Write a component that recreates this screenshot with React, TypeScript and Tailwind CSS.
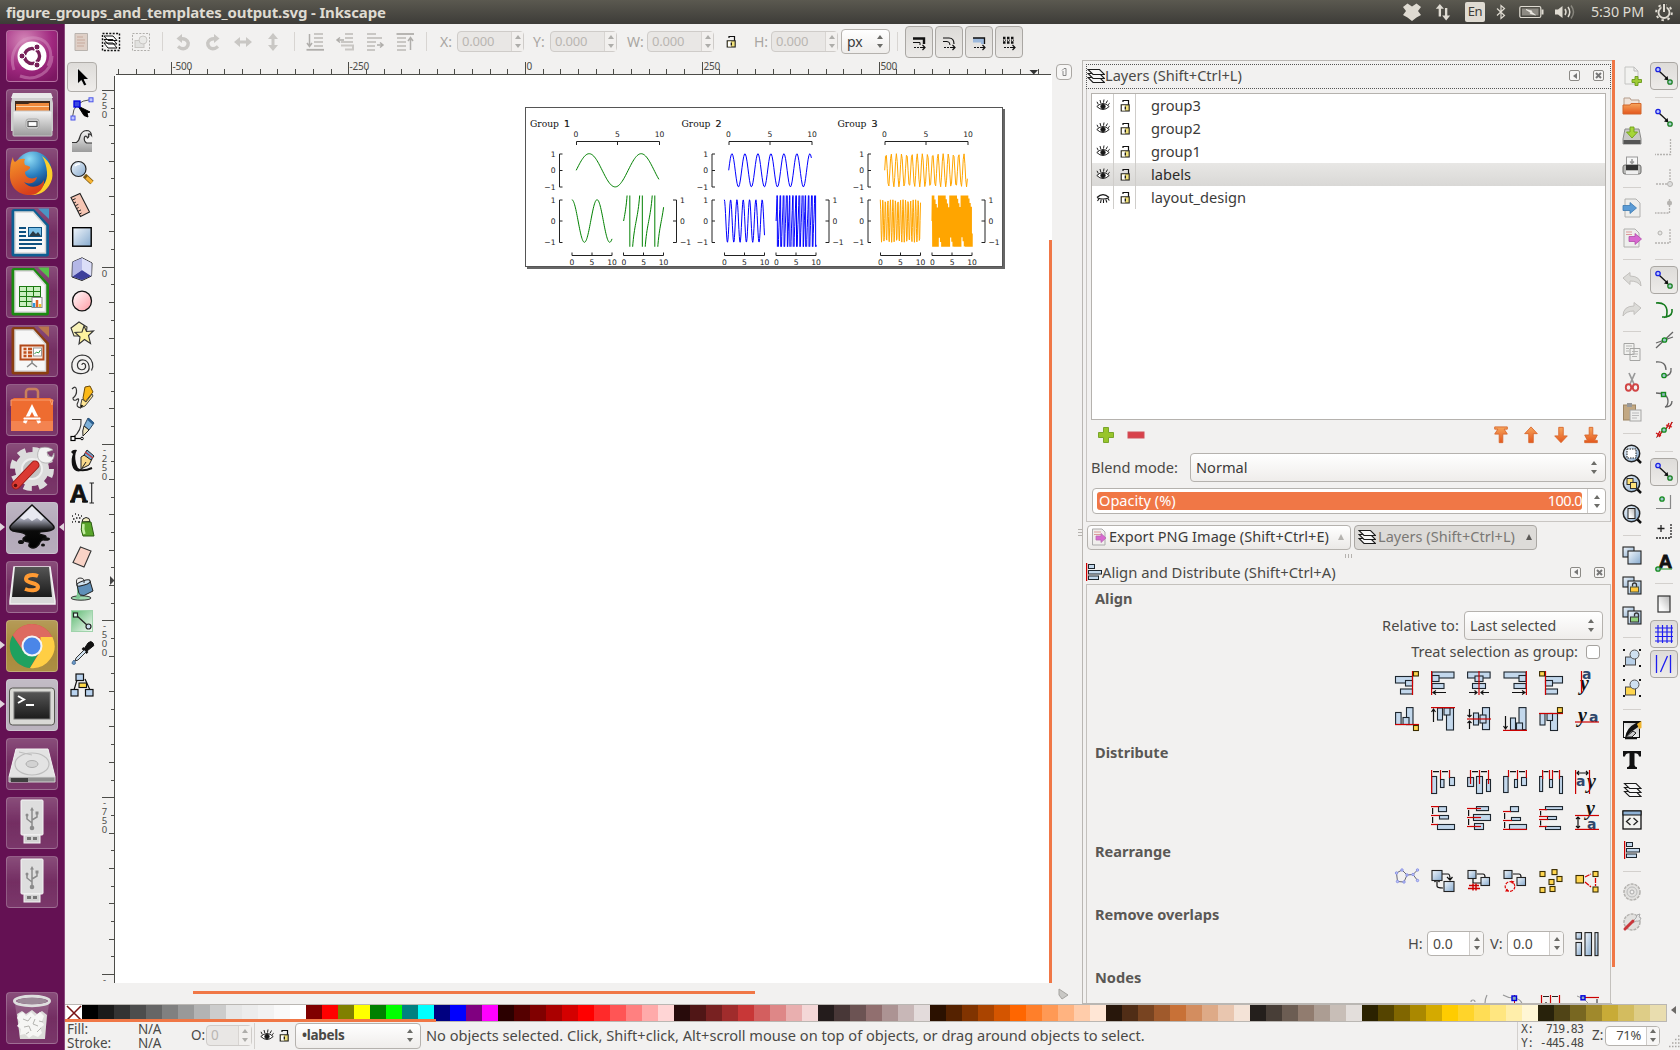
import React from "react";

/* ---------- palette ---------- */
const SWATCHES = (
  "000000 1a1a1a 333333 4d4d4d 666666 808080 999999 b3b3b3 cccccc e6e6e6 ececec f2f2f2 f9f9f9 ffffff " +
  "800000 ff0000 808000 ffff00 008000 00ff00 008080 00ffff 000080 0000ff 800080 ff00ff " +
  "2b0000 550000 800000 aa0000 d40000 ff0000 ff2a2a ff5555 ff8080 ffaaaa ffd5d5 " +
  "280b0b 501616 782121 a02c2c c83737 d35f5f de8787 e9afaf f4d7d7 " +
  "241c1c 483737 6c5353 916f6f ac9393 c8b7b7 e3dbdb " +
  "2b1100 552200 803300 aa4400 d45500 ff6600 ff7f2a ff9955 ffb380 ffccaa ffe6d5 " +
  "28170b 502d16 784421 a05a2c c87137 d38d5f deaa87 e9c6af f4e3d7 " +
  "241f1c 483e37 6c5d53 917c6f ac9d93 c8beb7 e3dedb " +
  "2b2200 554400 806600 aa8800 d4aa00 ffcc00 ffd42a ffdd55 ffe680 ffeeaa fff6d5 " +
  "28220b 504416 786721 a0892c c8ab37 d3bc5f decd87 e9ddaf"
).split(" ");

type Kids = { children?: React.ReactNode };

function Svg({ s = 24, v = s, children }: { s?: number; v?: number } & Kids) {
  return (
    <svg width={s} height={s} viewBox={`0 0 ${v} ${v}`} fill="none" className="block shrink-0 overflow-visible">
      {children}
    </svg>
  );
}

/* shared gradients */
function Defs() {
  return (
    <svg width="0" height="0" className="absolute">
      <defs>
        <linearGradient id="blue" x1="0" y1="0" x2="1" y2="1">
          <stop offset="0" stopColor="#f2f7fc" />
          <stop offset="1" stopColor="#86aace" />
        </linearGradient>
        <linearGradient id="pink" x1="0" y1="0" x2="1" y2="1">
          <stop offset="0" stopColor="#fff" />
          <stop offset="1" stopColor="#ff9aa4" />
        </linearGradient>
        <linearGradient id="green" x1="0" y1="0" x2="1" y2="1">
          <stop offset="0" stopColor="#5cb870" />
          <stop offset="1" stopColor="#f4fbf5" />
        </linearGradient>
        <linearGradient id="gray" x1="0" y1="0" x2="0" y2="1">
          <stop offset="0" stopColor="#f4f4f4" />
          <stop offset="1" stopColor="#9b9b9b" />
        </linearGradient>
        <linearGradient id="page" x1="0" y1="1" x2="1" y2="0">
          <stop offset="0" stopColor="#fff" />
          <stop offset="0.3" stopColor="#f8f8f8" />
          <stop offset="1" stopColor="#b4b4b4" />
        </linearGradient>
        <linearGradient id="dark" x1="0" y1="0" x2="0" y2="1">
          <stop offset="0" stopColor="#555" />
          <stop offset="1" stopColor="#1c1c1c" />
        </linearGradient>
        <linearGradient id="ink" x1="0" y1="0" x2="0" y2="1">
          <stop offset="0" stopColor="#fff" />
          <stop offset="0.35" stopColor="#9a9cab" />
          <stop offset="0.6" stopColor="#0b0b0b" />
          <stop offset="1" stopColor="#000" />
        </linearGradient>
        <linearGradient id="orange" x1="0" y1="0" x2="0" y2="1">
          <stop offset="0" stopColor="#f6a55c" />
          <stop offset="1" stopColor="#e4571d" />
        </linearGradient>
        <linearGradient id="fox" x1="0" y1="0" x2="0.4" y2="1">
          <stop offset="0" stopColor="#f79a2a" />
          <stop offset="1" stopColor="#d8401c" />
        </linearGradient>
        <radialGradient id="globe" cx="0.4" cy="0.2" r="0.9">
          <stop offset="0" stopColor="#8fdcf5" />
          <stop offset="0.5" stopColor="#2a7fc0" />
          <stop offset="1" stopColor="#0c2a6a" />
        </radialGradient>
        <radialGradient id="ubu" cx="0.35" cy="0.2" r="0.9">
          <stop offset="0" stopColor="#d487b8" />
          <stop offset="0.6" stopColor="#a0287f" />
          <stop offset="1" stopColor="#7c1762" />
        </radialGradient>
      </defs>
    </svg>
  );
}

/* ---------- launcher ---------- */
function LibreDoc({ c1, c2, children }: { c1: string; c2: string } & Kids) {
  return (
    <Svg s={52}>
      <path d="M8 2H28L43 18V47a2.500 2.500 0 0 1-2.500 2.500H8A2.500 2.500 0 0 1 5.500 47V4.500A2.500 2.500 0 0 1 8 2Z" fill={c1} />
      <path d="M32 1.500H43V12Z" fill={c2} />
      <path d="M9 5H27L39.500 19V46H9Z" fill="#f7f7f7" stroke="#d6d6d6" strokeWidth="1.500" />
      {children}
    </Svg>
  );
}

const UsbIcon = () => (
  <Svg s={52}>
    <rect x="15" y="3" width="22" height="35" rx="1" fill="#dedede" stroke="#f5f5f5" />
    <rect x="18" y="38" width="16" height="8" fill="#d2d2d2" stroke="#f5f5f5" />
    <path d="M21 40h4v3h-4zM27 40h4v3h-4z" fill="#777" />
    <path d="M26 31V13M26 26l-5-4v-4M26 23l5-3v-4" stroke="#8b8b8b" strokeWidth="1.500" />
    <path d="M24 13.500h4L26 10Z" fill="#8b8b8b" />
    <circle cx="26" cy="31" r="2.300" fill="#8b8b8b" />
    <circle cx="21" cy="18" r="1.500" fill="#8b8b8b" />
    <rect x="29.500" y="14.500" width="3" height="3" fill="#8b8b8b" />
  </Svg>
);

const LAUNCHER: { bg?: string; run?: boolean; focus?: boolean; icon: React.ReactNode }[] = [
  {
    bg: "bg-[#97327a]",
    icon: (
      <Svg s={52}>
        <rect width="52" height="52" rx="4" fill="url(#ubu)" />
        <path d="M8 40C2 22 14 6 30 8c14 2 18 16 12 28M14 46c16 6 32-4 32-20" stroke="#d99cc5" strokeOpacity="0.450" strokeWidth="3" />
        <circle cx="26" cy="26" r="14.500" fill="#fff" />
        <circle cx="26" cy="26" r="7.500" stroke="#772059" strokeWidth="3.500" />
        <path d="M26 26 16 26M26 26l5-9M26 26l5 9" stroke="#fff" strokeWidth="1.500" />
        <g fill="#772059" stroke="#fff">
          <circle cx="16" cy="26" r="3" />
          <circle cx="31" cy="17" r="3" />
          <circle cx="31" cy="35" r="3" />
        </g>
        <circle cx="26" cy="26" r="5.500" fill="#fff" />
      </Svg>
    ),
  },
  {
    icon: (
      <Svg s={52}>
        <path d="M7 4H45L47 14V42H5V14Z" fill="#cfcfcf" />
        <path d="M5 9 7 4H45L47 9Z" fill="#e8e8e8" />
        <rect x="9" y="12" width="35" height="12" fill="#3f2a1c" />
        <path d="M10 15H22L24 14H43V22H10Z" fill="#ef8a3c" />
        <path d="M10 17.500H43" stroke="#fbd3a8" />
        <rect x="7" y="22" width="39" height="25" rx="1" fill="url(#gray)" stroke="#c9c9c9" />
        <rect x="20" y="30" width="13" height="10" rx="2.500" fill="#d9d9d9" stroke="#a8a8a8" />
        <rect x="22" y="32.500" width="9" height="5" fill="#fff" stroke="#555" strokeWidth="1.200" />
      </Svg>
    ),
  },
  {
    icon: (
      <Svg s={52}>
        <circle cx="27" cy="22" r="18.500" fill="url(#globe)" />
        <path d="M36 8c8 6 12 14 10 23-3 11-12 17-22 16 12-5 18-13 17-23-.5-6-2-11-5-16Z" fill="#fbcf2b" />
        <path d="M7 9c0 3 1 4 2 5 3-3 7-4 10-3-1 2-1 4 0 6 2 1 6 1 5 3-1 2-4 3-5 4 0 6 7 8 12 5-1 6-8 8-13 5 5 7 16 6 20-2 1 7-5 15-14 15C12 47 3 39 4 25c0-6 1-12 3-16Z" fill="url(#fox)" />
      </Svg>
    ),
  },
  {
    icon: (
      <LibreDoc c1="#0e5e92" c2="#4a94c4">
        <rect x="22.500" y="20.500" width="13" height="9" fill="#7cc0e8" stroke="#0e5080" />
        <path d="m23 29 4-5 3 3 2-2 3 4Z" fill="#2b3b46" />
        <path d="M13 21h7M13 25h7M13 29h7M13 33h23M13 37h23M13 41h17" stroke="#0e5080" strokeWidth="2" />
      </LibreDoc>
    ),
  },
  {
    icon: (
      <LibreDoc c1="#1c8a12" c2="#58c04a">
        <rect x="13.500" y="20.500" width="21" height="20" fill="#c9efc0" stroke="#1c7a12" />
        <path d="M20.500 20V41M27.500 20V41M13 25.500H35M13 30.500H35M13 35.500H35" stroke="#1c7a12" />
        <rect x="26" y="31.500" width="10" height="10" fill="#fff" stroke="#8a8a8a" />
        <path d="M28 41v-4" stroke="#2d97dc" strokeWidth="2.500" />
        <path d="M31 41v-7" stroke="#e0662a" strokeWidth="2.500" />
        <path d="M34 41v-3" stroke="#f4c430" strokeWidth="2.500" />
      </LibreDoc>
    ),
  },
  {
    icon: (
      <LibreDoc c1="#8a3e12" c2="#b9764c">
        <rect x="14.500" y="20.500" width="23" height="14" fill="#fbe9df" stroke="#b2491a" strokeWidth="2" />
        <path d="M17.500 24h3M17.500 27.500h3M17.500 31h3M22 24h4M22 27.500h4M22 31h4" stroke="#c0501c" strokeWidth="2.400" />
        <rect x="27.500" y="23" width="8" height="8" fill="#fff" stroke="#999" />
        <path d="m28.500 29 2-2 2 1 2-3" stroke="#2f9a44" />
        <path d="M26 35v3M21 42l5-4 5 4" stroke="#888" strokeWidth="1.500" />
      </LibreDoc>
    ),
  },
  {
    icon: (
      <Svg s={52}>
        <path d="M20 14V8a3 3 0 0 1 3-3h6a3 3 0 0 1 3 3v6" stroke="#c9805c" strokeWidth="2.500" />
        <path d="M5 16 8 14H44L47 16V47H5Z" fill="#ee6c30" />
        <path d="M5 16H47L46 21 44 16M5 16v6" stroke="#f8a070" />
        <path d="M5 37H47V47H5Z" fill="#f38350" />
        <path d="m18.500 39 7.500-15 7.500 15" stroke="#fff" strokeWidth="3.500" />
        <rect x="17" y="33" width="18" height="3" rx="1.500" fill="#fff" stroke="#ee6c30" />
      </Svg>
    ),
  },
  {
    icon: (
      <Svg s={52}>
        <circle cx="26" cy="26" r="17" fill="#dcdcdc" />
        <circle cx="26" cy="26" r="19" stroke="#dcdcdc" strokeWidth="6" strokeDasharray="8 6.920" />
        <circle cx="26" cy="26" r="10" fill="#c4c4c4" stroke="#efefef" strokeWidth="2" />
        <path d="M28 22 38 12" stroke="#ededed" strokeWidth="6" />
        <path d="M34 5c6-2 11 0 13 2l-6 2 1 4 4 1 2-4c1 6-3 10-7 10s-7-1-9-5c-1-4 0-7 2-10Z" fill="#f2f2f2" stroke="#a4a4a4" strokeWidth="0.700" />
        <path d="M10 42 29 22" stroke="#9c1d18" strokeWidth="9" strokeLinecap="round" />
        <path d="M10 42 29 22" stroke="#db3a33" strokeWidth="7" strokeLinecap="round" />
        <circle cx="9.500" cy="42.500" r="1.800" fill="#5c0f0c" />
      </Svg>
    ),
  },
  {
    bg: "bg-[#b3a9b9]",
    run: true,
    focus: true,
    icon: (
      <Svg s={52}>
        <path d="M26 3 46 22c4 4 2 6-4 7-4 1-8 0-9 2 0 3 7 1 7 4s-5 2-6 5c-1 4-6 8-10 5-3-2 1-3-1-5-2-1-6 0-6-3 0-2 4-2 3-4-1-3-9-3-13-4-4-2-4-4-1-7Z" fill="url(#ink)" stroke="#111" strokeWidth="1.500" />
        <path d="M26 5 14 16l4 2 4-2 4 3 5-3 4 3 3-3Z" fill="#e8e9f0" />
        <ellipse cx="15" cy="40" rx="3" ry="2" fill="#111" />
        <ellipse cx="40" cy="37" rx="4" ry="1.800" fill="#111" />
        <ellipse cx="37" cy="43" rx="2" ry="1.500" fill="#111" />
      </Svg>
    ),
  },
  {
    icon: (
      <Svg s={52}>
        <path d="M8 6H44L49 40V43H4V40Z" fill="#d8d8d8" stroke="#f1f1f1" strokeWidth="1.500" />
        <path d="M9 6H43L46 36H6Z" fill="url(#dark)" />
        <path d="M32 15c-5-2-12-1-12 3 0 5 12 3 12 8 0 4-8 4-13 2" stroke="#ff9a33" strokeWidth="4" />
      </Svg>
    ),
  },
  {
    bg: "bg-[#a8893a]",
    run: true,
    icon: (
      <Svg s={52}>
        <circle cx="26" cy="26" r="22" fill="#dd5246" />
        <path d="M6.500 15.500A22 22 0 0 0 24 48L34 31H18Z" fill="#1fa15f" />
        <path d="M46.500 17A22 22 0 0 1 24 48L34.500 31V17Z" fill="#ffce44" />
        <path d="M7 15 17 31H26V17H46A22 22 0 0 0 7 15Z" fill="#dd6a60" />
        <circle cx="26" cy="26" r="10.500" fill="#f4f4f4" />
        <circle cx="26" cy="26" r="8.500" fill="#4a86e8" />
      </Svg>
    ),
  },
  {
    bg: "bg-[#b8b0bb]",
    run: true,
    icon: (
      <Svg s={52}>
        <rect x="3.500" y="9" width="45" height="37" rx="3" fill="#d9d9d5" stroke="#55554f" />
        <rect x="8" y="13" width="36" height="27" fill="url(#dark)" stroke="#777" />
        <path d="m12 17 6 3.500-6 3.500" stroke="#fff" strokeWidth="2" />
        <path d="M20 26h8" stroke="#fff" strokeWidth="2" />
      </Svg>
    ),
  },
  {
    icon: (
      <Svg s={52}>
        <path d="M10 11H42L49 39H3Z" fill="#e3e3e3" stroke="#f3f3f3" />
        <path d="M3 39H49V44H3Z" fill="#8f8f8f" stroke="#d0d0d0" />
        <path d="M5 40H22V44H5Z" fill="#3f3f3f" />
        <ellipse cx="26" cy="26" rx="17" ry="11" stroke="#bdbdbd" strokeWidth="1.200" />
        <ellipse cx="26" cy="26" rx="6" ry="3.500" fill="#d2d2d2" stroke="#adadad" />
        <path d="M13 14 26 17" stroke="#bdbdbd" />
      </Svg>
    ),
  },
  { icon: <UsbIcon /> },
  { icon: <UsbIcon /> },
];

const TrashIcon = () => (
  <Svg s={52}>
    <path d="M9 12 14 47H38L43 12Z" fill="#b79bb0" fillOpacity="0.350" />
    <path d="m11 22 5-3 4 3 6-4 5 4 5-3 5 4-2 24H14Z" fill="#dcdcd9" />
    <path d="m13 22 4-2 3 4 5-4 4 4 5-4 4 4-2 5 2 4-4 3 2 5-4 4-5-2-4 3-4-4-5 1 1-6-4-3 3-4-3-4Z" fill="#f6f6f4" />
    <path d="m17 27 5 2 3-4M29 27l-2 5 5 2M18 35l5-1 2 5M31 40l4-4M20 42l3-2M33 29l4 1" stroke="#b4b4b0" />
    <ellipse cx="26" cy="9" rx="17.500" ry="4.800" stroke="#dedede" strokeWidth="3" />
    <ellipse cx="26" cy="9" rx="15" ry="3.300" fill="#9d8a99" />
  </Svg>
);

function Tile({ bg = "bg-[#7a3a6a]/70", run, focus, children }: { bg?: string; run?: boolean; focus?: boolean } & Kids) {
  return (
    <div className="relative h-[52px] w-[65px] pl-[6px]">
      <div className={`h-[52px] w-[52px] overflow-hidden rounded-[4px] border border-white/20 bg-gradient-to-b from-white/15 via-transparent to-white/5 ${bg}`}>
        <div className="-m-px">{children}</div>
      </div>
      {run && <div className="absolute left-0 top-[21px] h-0 w-0 border-y-[4px] border-l-[5px] border-y-transparent border-l-[#e0d4dc]" />}
      {focus && <div className="absolute right-[1px] top-[21px] h-0 w-0 border-y-[4px] border-r-[5px] border-y-transparent border-r-[#e0d4dc]" />}
    </div>
  );
}

/* ---------- small shared icons ---------- */
const Lock = () => (
  <svg width="11" height="13" viewBox="0 0 11 13" fill="none" className="block">
    <path d="M3 3V1.500h5.500V6" stroke="#111" strokeWidth="1.200" />
    <rect x="1.200" y="5.800" width="8" height="6.200" fill="#f2e27a" stroke="#222" strokeWidth="1.100" />
    <path d="M2 6.500h3v5H2Z" fill="#fff" />
    <path d="M5.300 7.500v3" stroke="#111" strokeWidth="1.300" />
  </svg>
);

const Eye = () => (
  <svg width="14" height="13" viewBox="0 0 14 13" fill="none" className="block" stroke="#222">
    <path d="M.8 7.500Q7 1.500 13.200 7.500 7 13.500.8 7.500Z" fill="#fff" />
    <circle cx="7" cy="7.500" r="2.200" fill="#161616" />
    <path d="M2.300 5.500 1 2.800M4.800 4 4 1M7.500 3.600 8 .5M10 4.300 11.500 1.500M12 5.800l1.700-1.600" />
  </svg>
);

const EyeClosed = () => (
  <svg width="14" height="13" viewBox="0 0 14 13" fill="none" className="block" stroke="#161616">
    <path d="M1 6.500Q7 .8 13 6.500M1.500 7Q7 9 12.500 7" strokeWidth="1.200" />
    <path d="M3 7.800 1.500 10M5.200 8.500 4.500 12M7.500 8.600V12M9.800 8.300l1 3.200M11.800 7.500l1.500 2" strokeWidth="1.100" />
  </svg>
);

const LayersIcon = ({ w = 18 }: { w?: number }) => (
  <svg width={w} height="16" viewBox="0 0 18 16" className="block shrink-0" fill="#f7f7f7" stroke="#1b1b1b" strokeWidth="1.100">
    <path d="M1 9.500H12.500L17.500 14.500H6Z" />
    <path d="M1 5.500H12.500L17.500 10.500H6Z" />
    <path d="M1 1.500H12.500L17.500 6.500H6Z" />
  </svg>
);

const Updown = ({ dim }: { dim?: boolean }) => (
  <div className={`flex flex-col items-center gap-[5px] ${dim ? "opacity-50" : ""}`}>
    <div className="h-0 w-0 border-x-[3px] border-b-[4px] border-x-transparent border-b-[#6c6c68]" />
    <div className="h-0 w-0 border-x-[3px] border-t-[4px] border-x-transparent border-t-[#6c6c68]" />
  </div>
);

function DimField({ value }: { value: string }) {
  return (
    <div className="flex h-[21px] w-[67px] rounded-[4px] border border-[#cfccc9] bg-[#e9e7e5]">
      <div className="flex w-[53px] items-center pl-1 text-[13px] tracking-[-0.2px] text-[#b9b6b2]">{value}</div>
      <div className="flex flex-1 items-center justify-center border-l border-[#d8d5d2] bg-[#f2f0ee]">
        <Updown dim />
      </div>
    </div>
  );
}

/* ---------- toolbar ---------- */
const Cell = ({ children }: Kids) => <div className="flex w-[30px] shrink-0 justify-center">{children}</div>;
const VSep = () => (
  <div className="flex w-[12px] shrink-0 justify-center">
    <div className="h-[19px] w-px bg-[#d8d5d2]" />
  </div>
);

const G = "#c9c7c4";
const G2 = "#b0aeab";
const TB1 = [
  <Svg s={20} key="a">
    <path d="M4 1.500H16.500V18.500H4Z" fill="#decfc6" stroke="#b9b3ae" />
    <path d="M6 5h6M6 8h8M6 11h8M6 14h7" stroke="#c8a99c" />
  </Svg>,
  <Svg s={20} key="b">
    <rect x="1.500" y="1.500" width="17" height="17" stroke="#111" strokeWidth="1.400" strokeDasharray="2 1.400" />
    <path d="M3 11H12L16 16H7ZM3 7.500H12L16 12H7ZM3 4H12L16 8.500H7Z" fill="#fff" stroke="#111" />
  </Svg>,
  <Svg s={20} key="c">
    <rect x="1.500" y="1.500" width="17" height="17" stroke={G2} strokeDasharray="2 1.400" />
    <rect x="4" y="8.500" width="9" height="7" fill="#e1e1df" stroke={G} />
    <circle cx="12" cy="8" r="4" fill="#e9e9e7" stroke={G} />
  </Svg>,
];
const TB2 = [
  <Svg s={20} key="a"><path d="M5 14.500q5 4 8.500 1 4-5-1-8-2-1-5-.5" stroke={G} strokeWidth="3.500" /><path d="M9 2v9L3.500 6.500Z" fill={G} /></Svg>,
  <Svg s={20} key="b"><path d="M15 14.500q-5 4-8.500 1-4-5 1-8 2-1 5-.5" stroke={G} strokeWidth="3.500" /><path d="M11 2v9l5.500-4.500Z" fill={G} /></Svg>,
  <Svg s={20} key="c"><path d="M6 10h8" stroke={G} strokeWidth="3" /><path d="M1 10 7 5v10ZM19 10 13 5v10Z" fill={G} /></Svg>,
  <Svg s={20} key="d"><path d="M10 6v8" stroke={G} strokeWidth="3" /><path d="M10 1 5 7h10ZM10 19 5 13h10Z" fill={G} /></Svg>,
];
const TB3 = [
  <Svg s={20} key="a"><path d="M9 2h9M9 6h9M9 10h9M9 14h9" stroke={G} strokeWidth="2" /><path d="M1.500 17.800H19" stroke={G2} strokeWidth="1.800" /><path d="M4.500 2v11M2 11l2.500 3.500L7 11" stroke={G2} strokeWidth="1.500" /></Svg>,
  <Svg s={20} key="b"><path d="M10 2h8M10 6h8M6 10h12" stroke={G} strokeWidth="2" /><path d="M6 13.500H18v4H10" stroke={G} strokeWidth="2" /><path d="M9 8H3M5 5.500 2 8l3 2.500" stroke={G2} strokeWidth="1.500" /></Svg>,
  <Svg s={20} key="c"><path d="M2 2h9M2 6h15M2 10h9M2 14h8M2 18h8" stroke={G} strokeWidth="2" /><path d="M12 13h5M15 10.500l3 2.500-3 2.500" stroke={G2} strokeWidth="1.500" /></Svg>,
  <Svg s={20} key="d"><path d="M2 6h9M2 10h9M2 14h9M2 18h9" stroke={G} strokeWidth="2" /><path d="M1.500 2H19" stroke={G2} strokeWidth="1.800" /><path d="M15.500 18V6M13 9l2.500-3.500L18 9" stroke={G2} strokeWidth="1.500" /></Svg>,
];
const dashArrow = (
  <>
    <path d="M3 13.500h6" stroke="#111" strokeWidth="1.200" strokeDasharray="2 1" />
    <path d="M9 13.500h4.500M11.500 11l2.500 2.500-2.500 2.500" stroke="#111" strokeWidth="1.200" />
  </>
);
const TB4 = [
  <Svg s={16} key="a"><path d="M2 4.500H13V10" stroke="#111" strokeWidth="2.400" /><path d="M2 8.500H9V11" stroke="#111" />{dashArrow}</Svg>,
  <Svg s={16} key="b"><path d="M2 4H8Q13 4 13 10" stroke="#111" strokeWidth="1.200" /><path d="M2 7.500H6Q9 7.500 9 11" stroke="#111" />{dashArrow}</Svg>,
  <Svg s={16} key="c"><path d="M2 4H13.500V10H10V8.500H2Z" fill="#9db9dc" /><path d="M2 4H13.500V10" stroke="#111" strokeWidth="1.300" />{dashArrow}</Svg>,
  <Svg s={16} key="d"><path d="M2 4H14M2 8.500H14" stroke="#111" strokeWidth="2.500" strokeDasharray="2.500 1.500" /><path d="M2 6.200H14" stroke="#111" strokeDasharray="1 1" />{dashArrow}</Svg>,
];

function Toolbar() {
  return (
    <div className="flex h-9 items-center pl-px pb-[2px] pt-[1px] text-[14px]">
      {TB1.map((i, k) => <Cell key={k}>{i}</Cell>)}
      <VSep />
      {TB2.map((i, k) => <Cell key={k}>{i}</Cell>)}
      <VSep />
      {TB3.map((i, k) => <Cell key={k}>{i}</Cell>)}
      <VSep />
      <div className="flex items-center text-[#a9a6a2]">
        <span className="ml-2 w-[17px]">X:</span><DimField value="0.000" />
        <span className="ml-[9px] w-[17px]">Y:</span><DimField value="0.000" />
        <span className="ml-[10px] w-[20px]">W:</span><DimField value="0.000" />
        <div className="flex w-[35px] justify-center"><Lock /></div>
        <span className="ml-[5px] w-[17px]">H:</span><DimField value="0.000" />
      </div>
      <div className="ml-[3px] flex h-[25px] w-[49px] items-center justify-between rounded-[4px] border border-[#b5b2ae] bg-gradient-to-b from-white to-[#efedeb] pl-[5px] pr-[6px] text-[#3c3c3c]">
        <span>px</span><Updown />
      </div>
      <div className="flex w-[15px] justify-center"><div className="h-[19px] w-px bg-[#d8d5d2]" /></div>
      <div className="mt-px flex gap-[2px]">
        {TB4.map((i, k) => (
          <div key={k} className="flex h-[32px] w-[28px] items-center justify-center rounded-[4px] border border-[#aaa7a3] bg-gradient-to-b from-[#dddbd8] to-[#ebe9e7]">
            {i}
          </div>
        ))}
      </div>
    </div>
  );
}

/* ---------- toolbox ---------- */
const TOOLS = [
  <Svg key="1"><path d="M7.500 3V19l3.800-3.500L14 21l2.800-1.200L14.200 14.500H19Z" fill="#000" stroke="#fff" strokeWidth="0.800" /></Svg>,
  <Svg key="2"><path d="M2.500 20Q3 4 21 2.500" stroke="#555" /><path d="m8 9 12 6-3 1 1 4-4-1.500Z" fill="#000" stroke="#000" /><rect x="1" y="19" width="4" height="4" fill="#bfc6ff" stroke="#4a55e8" /><rect x="19" y="0.800" width="4" height="4" fill="#bfc6ff" stroke="#4a55e8" /><rect x="4" y="4" width="6" height="6" fill="#3b49e0" stroke="#0000e0" strokeWidth="1.300" /></Svg>,
  <Svg key="3"><path d="M2 14H8Q10 11 11 7q2-5 7-5 4 1 4 5-1-2-3-2 1 3-1 4-1-3-3-1-1 5 2 6H22V23H2Z" fill="url(#gray)" /><path d="M2 13.500H6.500Q9 12 10 7.500 11.500 2 16.500 1.500q4.500 0 5 5-1.500-2-3-1.500 1 3-1 4-1-3-3-1-1 4 2 6H22" stroke="#333" strokeWidth="1.200" /></Svg>,
  <Svg key="4"><path d="m14.500 14.500 7.500 7" stroke="#7c5810" strokeWidth="4.800" /><path d="m16.500 16.500 5.500 5" stroke="#f5b335" strokeWidth="3.200" /><circle cx="8.500" cy="8" r="7.500" fill="url(#blue)" stroke="#222" strokeWidth="1.200" /><path d="M5 5q2-2.500 5-2" stroke="#fff" strokeWidth="1.500" /></Svg>,
  <Svg key="5"><path d="m1 4.500 9-4L19.500 19l-9 4.500Z" fill="#f6c6b4" stroke="#222" strokeWidth="1.100" /><path d="m2.500 7 3-1.400M4 10l2-1M5.300 12.800l3-1.400M6.700 15.500l2-1M8 18.300l3-1.400M9.500 21l2-1" stroke="#222" /></Svg>,
  <Svg key="6"><rect x="2.700" y="2.700" width="18.500" height="18.500" fill="url(#blue)" stroke="#000" strokeWidth="1.400" /></Svg>,
  <Svg key="7"><path d="M2.500 5 12 .8 22 6 21.500 19 12 23.500 2 20Z" fill="#aeb1e4" stroke="#222" /><path d="M12 13 21 19 12 23 2.500 19.500Z" fill="#3c3f9c" /><path d="M12 1V13L2.500 19.500V5Z" fill="#b4b7e6" /><path d="M12 1 21.500 6V19L12 13Z" fill="#dcdef8" /></Svg>,
  <Svg key="8"><ellipse cx="12" cy="12" rx="9.500" ry="9.800" fill="url(#pink)" stroke="#111" strokeWidth="1.300" /></Svg>,
  <Svg key="9"><path d="m1 7 8-6 8 5-1 9H4Z" fill="#f8f2b8" stroke="#333" strokeWidth="1.100" /><path d="m14 5 2.500 5.500 7-.5-5 4.500 2 8-6-4-5.500 4.500 1-7L5 11.500l7-.5Z" fill="#fdf29e" stroke="#333" strokeWidth="1.100" /></Svg>,
  <Svg key="10"><path d="M12 12q0-2 2-1.500t1.500 4q-1.500 3-5 2T7.500 11q1.500-4.500 6-4t5.500 6-4 7-9.500-.5T2 10Q4 2.500 12 2q8 0 10.500 8 1 4-1 7.500" stroke="#333" strokeWidth="1.200" /></Svg>,
  <Svg key="11"><path d="M2 4q4-4 4.500 1T3 13q0 3 3 2 4-3 2 2-3 5 3 6" stroke="#333" strokeWidth="1.200" /><path d="m13 13 2-11 5-1 3 6-8 10Z" fill="#fbb918" stroke="#6b4a08" /><path d="m12 14 4 3 6-8 1 2-8 10-5 2Z" fill="#ffe694" stroke="#333" strokeWidth="0.900" /><path d="m10.500 22.500 3-1.500-2-1.500Z" fill="#000" /></Svg>,
  <Svg key="12"><path d="M2 2.500H11Q12 14 3 20.500" stroke="#333" strokeWidth="1.100" /><path d="m14 9 4-8 6 5-5 7Z" fill="#7db0d8" stroke="#2c4a66" /><path d="m14 9 5 4-6 6q-1-5 1-10Z" fill="#f0e6c0" stroke="#222" /><path d="M17.500 3 19 1l5 4.500-1.500 2Z" fill="#2c5f90" /><rect x="1" y="19.500" width="4" height="4" fill="#fff" stroke="#000" strokeWidth="1.200" /><path d="M5 21.500h6" stroke="#000" strokeWidth="1.200" /><circle cx="12" cy="21.500" r="1.300" fill="#fff" stroke="#000" /></Svg>,
  <Svg key="13"><path d="M1 3q2-3 6-2-3 5-1 13 1 5 5 8-7 2-9-6Q1 9 3 5Z" fill="#111" /><path d="M7 20q6 3 15-1" stroke="#111" strokeWidth="2" /><path d="m11 8 5-3 6 5-3 6-8 4Z" fill="#f8d98a" stroke="#222" /><path d="m14 6 3-5 7 6-3 4Z" fill="#6fa5d4" stroke="#222" /><path d="m15 3 8 6" stroke="#c33" strokeWidth="1.200" /><path d="m12 19 4-6" stroke="#222" /></Svg>,
  <Svg key="14"><text x="0" y="21" fontSize="24" fontWeight="700" fill="#111" stroke="#111" strokeWidth="0.800" fontFamily="'Liberation Sans', sans-serif">A</text><path d="M0 20.500h5M12 20.500h6" stroke="#111" strokeWidth="2" /><path d="M19.500 2H24M21.700 2V22M19.500 22H24" stroke="#222" strokeWidth="1.100" /></Svg>,
  <Svg key="15"><path d="M2 3h1M5 1h1M8 2h1M3 6h1.500M6 5h1.500M9 5h1.500M2 9h1M5 8.500h1M8 9h2M11 3h1" stroke="#222" strokeWidth="1.700" /><path d="M12 9q0-4 4-4.500 4 0 4 4Z" fill="#f2ecc0" stroke="#222" /><path d="M12 9h9l3 14H13q-3-6-1-14Z" fill="#5aa52b" stroke="#2c5c12" /><path d="M13.500 11q-1 6 1 10" stroke="#c6eea4" strokeWidth="2.500" /></Svg>,
  <Svg key="16"><path d="M10.500 2 21 6 14 22 3 17.500Z" fill="#f9d3c6" stroke="#333" strokeWidth="1.100" /></Svg>,
  <Svg key="17"><ellipse cx="11" cy="21" rx="10" ry="2.200" fill="#9fd8ae" stroke="#333" /><path d="M3 20q4 2 4-4V9l3 1v8q1 3-2 4Z" fill="#7cc893" /><path d="m7 8 13-4 3 10-9 4.500q-4 0-5-2Z" fill="#5f8fb8" stroke="#222" /><ellipse cx="13.500" cy="6" rx="7" ry="2.200" transform="rotate(-18 13.500 6)" fill="#cfe2f0" stroke="#222" /><path d="M7 8Q5 1 10 1t4 5" stroke="#333" /></Svg>,
  <Svg key="18"><rect x="1.500" y="1.500" width="21" height="21" fill="url(#green)" stroke="#9fd3ab" /><path d="M6 6 18 17" stroke="#222" strokeWidth="1.300" /><rect x="3.500" y="4" width="4" height="4" fill="#dfe" stroke="#222" strokeWidth="1.200" /><circle cx="18.500" cy="17.500" r="2.500" fill="#cde" stroke="#222" strokeWidth="1.200" /></Svg>,
  <Svg key="19"><path d="m14 8 4-6q3-3 5 0t-1 4l-5 4Z" fill="#111" stroke="#111" /><path d="m12.500 7 5 5" stroke="#111" strokeWidth="2.500" /><path d="M14 9 6 17l-1 3 3-1 8-8" fill="#cfe0ee" stroke="#333" /><path d="M4 19q-4 4 0 4.500 3-.5 0-4.500Z" fill="#6d9ccb" stroke="#2c5580" strokeWidth="0.700" /></Svg>,
  <Svg key="20"><path d="M7 7 4 17M15 6l5 11" stroke="#111" strokeWidth="1.200" /><rect x="6" y="1" width="7.500" height="6.500" fill="#b8d2ee" stroke="#111" strokeWidth="1.200" /><rect x="1" y="16.500" width="7" height="6.500" fill="#b8d2ee" stroke="#111" strokeWidth="1.200" /><rect x="15.500" y="16.500" width="7.500" height="6.500" fill="#b8d2ee" stroke="#111" strokeWidth="1.200" /><rect x="9" y="10" width="7.500" height="4.500" fill="#ffd94a" stroke="#111" strokeWidth="1.100" /></Svg>,
];

function Toolbox() {
  return (
    <div className="flex w-[34px] shrink-0 flex-col items-center gap-[2px] pt-[2px]">
      {TOOLS.map((t, k) => (
        <div key={k} className={`flex h-[30px] w-[30px] items-center justify-center ${k === 0 ? "rounded-[4px] border border-[#b0ada9] bg-gradient-to-b from-[#dedcd9] to-[#efedeb]" : ""}`}>
          {t}
        </div>
      ))}
    </div>
  );
}

/* ---------- rulers ---------- */
const STEP = 17.68;
const CROSS = "crispEdges";

function TopRuler() {
  const ticks: React.ReactNode[] = [];
  for (let i = -23; i <= 29; i++) {
    const x = Math.round(525 + i * STEP) + 0.5;
    if (x > 1051) break;
    const major = i % 10 === 0;
    ticks.push(<path key={i} d={`M${x} ${major ? 62 : 69}V74`} stroke="#4c4c48" shapeRendering={CROSS} />);
    if (major)
      ticks.push(
        <text key={`t${i}`} x={x + 1} y={69.500} fontSize="10" letterSpacing="-0.2" fill="#4c4c48">{i * 25}</text>
      );
  }
  return (
    <svg width="953" height="15" viewBox="99 60 953 15" className="block">
      <path d="M116 74.500H1051" stroke="#4c4c48" />
      {ticks}
      <path d="M1029.500 70h8.500l-4.200 4.500Z" fill="#333" />
    </svg>
  );
}

function LeftRuler() {
  const out: React.ReactNode[] = [];
  const labels = ["250", "0", "-250", "-500", "-750", "-"];
  for (let i = 0; i <= 50; i++) {
    const y = Math.round(90 + i * STEP) + 0.5;
    const major = i % 10 === 0;
    out.push(<path key={i} d={`M${major ? 102 : i % 2 ? 111 : 109} ${y}H114`} stroke="#4c4c48" shapeRendering={CROSS} />);
    if (major)
      labels[i / 10].split("").forEach((c, k) =>
        out.push(
          <text key={`${i}-${k}`} x="104.500" y={y + (labels[i / 10][0] === "-" ? 8.500 : 9) + k * 9} textAnchor="middle" fontSize="9.500" fill="#4c4c48">{c}</text>
        )
      );
  }
  return (
    <svg width="16" height="908" viewBox="99 75 16 908" className="block shrink-0">
      <path d="M114.500 76V983" stroke="#4c4c48" />
      {out}
      <path d="M110 576v9l4.500-4.500Z" fill="#444" />
    </svg>
  );
}

/* ---------- drawing on the canvas ---------- */
function curve(fn: (x: number) => number, x0: number, w: number, cy: number, amp: number, lim = 1e9) {
  let d = "";
  for (let i = 0; i < 100; i++) {
    const t = (i * 10) / 99;
    const v = Math.max(-lim, Math.min(lim, fn(t)));
    d += `${i ? "L" : "M"}${(x0 + (t * w) / 10).toFixed(2)} ${(cy - v * amp).toFixed(2)}`;
  }
  return d;
}

function Plot({ dx, tx, n, k, color }: { dx: number; tx: number; n: number; k: number; color: string }) {
  const t = { fontSize: 7.6, fill: "#222" };
  const px = (v: number) => v + dx;
  return (
    <g fontFamily="'DejaVu Sans', sans-serif">
      <text x={tx} y="127" fontSize="10" fill="#111" fontFamily="'DejaVu Serif', serif" textLength="29" lengthAdjust="spacingAndGlyphs">Group</text>
      <text x={tx + 34} y="127" fontSize="9.500" fill="#111" stroke="#111" strokeWidth="0.200">{n}</text>
      <g {...t} textAnchor="middle">
        {[[576, "0", 137], [617.5, "5", 137], [659.500, "10", 137], [571.800, "0", 264.500], [592, "5", 264.500], [612, "10", 264.500], [624, "0", 264.500], [643.700, "5", 264.500], [663.600, "10", 264.500]].map(([x, s, y], i) => (
          <text key={i} x={px(x as number)} y={y as number}>{s}</text>
        ))}
      </g>
      <g {...t} textAnchor="end">
        {[["1", 156.500], ["0", 173], ["−1", 189.500], ["1", 202.500], ["0", 224], ["−1", 245]].map(([s, y], i) => (
          <text key={i} x={px(555.500)} y={y as number}>{s}</text>
        ))}
      </g>
      <g {...t}>
        {[["1", 202.500], ["0", 224], ["−1", 245]].map(([s, y], i) => (
          <text key={i} x={px(680)} y={y as number}>{s}</text>
        ))}
      </g>
      <g transform={`translate(${dx} 0)`} stroke="#222" strokeWidth="1">
        <path d="M576.500 145V141.500H659.500V145M617.500 141.500V145" />
        <path d="M562.500 154H559.500V187H562.500M559.500 170.500H562.500" />
        <path d="M562.500 200H559.500V242.500H562.500M559.500 221H562.500" />
        <path d="M673 200H676.500V242.500H673M676.500 221H673" />
        <path d="M572 252.500V255.500H612V252.500M592 255.500V252.500" />
        <path d="M623.500 252.500V255.500H663.500V252.500M643.500 255.500V252.500" />
      </g>
      <g stroke={color} strokeWidth="1" fill="none">
        <path d={curve((x) => Math.sin(k * x), px(576.200), 82.700, 170.300, 16.600)} />
        <path d={curve((x) => Math.cos(k * x), px(571.800), 40.200, 221, 21.300)} />
        <path d={curve((x) => Math.tan(k * x), px(623.600), 40, 221, 21.300, 60)} clipPath="url(#tanclip)" strokeWidth={k === 10 ? 1.3 : 1} />
      </g>
    </g>
  );
}

function Canvas() {
  return (
    <svg width="934" height="908" viewBox="115 75 934 908" className="block shrink-0 bg-white" fill="none">
      <clipPath id="tanclip"><rect x="500" y="195.500" width="540" height="51.300" /></clipPath>
      <path d="M527 109H1005V269H527Z" fill="#666" />
      <rect x="525.500" y="107.500" width="477" height="159" fill="#fff" stroke="#555" />
      <Plot dx={0} tx={530} n={1} k={1} color="#008000" />
      <Plot dx={152.500} tx={681.500} n={2} k={4} color="#0000ff" />
      <Plot dx={308.500} tx={837.500} n={3} k={10} color="#ffa500" />
    </svg>
  );
}

/* ---------- dock icons ---------- */
type R4 = [number, number, number, number];
type Glyph = { b?: R4[]; r?: R4[]; y?: R4[]; k?: string; t?: [string, number, number, string][] };

function AlignGlyph({ g }: { g: Glyph }) {
  return (
    <Svg>
      {g.b?.map(([x, y, w, h], i) => <rect key={i} x={x} y={y} width={w} height={h} fill="#c3d8ec" stroke="#1d262e" strokeWidth="1.100" />)}
      {g.t?.map(([s, x, y, c], i) => (
        <text key={i} x={x} y={y} fill={c} fontWeight="700" fontSize={s === "y" ? 20 : 14} fontStyle={s === "y" ? "italic" : "normal"} fontFamily={s === "y" ? "'Liberation Serif', serif" : "'DejaVu Sans', sans-serif"}>{s}</text>
      ))}
      {g.r?.map(([a, b, c, d], i) => <path key={i} d={`M${a} ${b}L${c} ${d}`} stroke="#cc0000" strokeWidth="1.200" />)}
      {g.y?.map(([x, y, w, h], i) => <rect key={i} x={x} y={y} width={w} height={h} fill="#ffd64f" stroke="#3a2c00" strokeWidth="1.100" />)}
      {g.k && <path d={g.k} stroke="#111" strokeWidth="1.200" />}
    </Svg>
  );
}

const A = "#2f476b";
const ALIGN: Glyph[][] = [
  [
    { b: [[0.5, 5.500, 17, 6.500], [10.500, 9.500, 7, 5.500], [5.500, 18, 12, 5]], r: [[17.500, 0, 17.500, 24]], y: [[18.500, 0.600, 4.900, 4.400]] },
    { b: [[1, 1, 22, 6], [1, 4.500, 7, 6], [1, 12.500, 12, 5]], r: [[0.600, 0, 0.600, 24]], k: "M15 21.500H2M5 19.500 2 21.500 5 23.500" },
    { b: [[0.600, 1, 22.500, 6], [8, 5, 8, 5.500], [5.500, 12.500, 13, 5]], r: [[12, 0, 12, 24]], k: "M2 21.500H10M7.500 19.500 10 21.500 7.500 23.500M22 21.500H14M16.500 19.500 14 21.500 16.500 23.500" },
    { b: [[1, 1, 22, 6], [16, 4.500, 7, 6], [11, 12.500, 12, 5]], r: [[23.400, 0, 23.400, 24]], k: "M9 21.500H22M19 19.500 22 21.500 19 23.500" },
    { b: [[6.500, 5.500, 17, 6.500], [6.500, 9.500, 7, 5.500], [6.500, 18, 12, 5]], r: [[6.500, 0, 6.500, 24]], y: [[0.600, 0.600, 4.900, 4.400]] },
    { t: [["a", 7, 8, A], ["y", 5, 19, "#111"]], r: [[6.500, 0, 6.500, 22]] },
  ],
  [
    { b: [[0.600, 5.500, 5.500, 12], [11.500, 0.600, 6.500, 17], [8, 10.500, 6, 7]], r: [[0, 17.500, 24, 17.500]], y: [[18.500, 18.500, 4.900, 5]] },
    { b: [[6.500, 1, 5, 12], [15.500, 1, 7, 22], [13, 1, 6, 7]], r: [[0, 0.600, 24, 0.600]], k: "M2.500 15V2M.500 5 2.500 2 4.500 5" },
    { b: [[6.500, 6, 5, 12], [15.500, 0.600, 7, 22], [13, 8, 6, 8]], r: [[0, 12, 24, 12]], k: "M2.500 2V10M.500 8 2.500 10 4.500 8M2.500 22V14M.500 16 2.500 14 4.500 16" },
    { b: [[7.500, 11, 5, 12], [16, 0.600, 7, 22], [13.500, 16, 6, 7]], r: [[0, 23.400, 24, 23.400]], k: "M2.500 9V22M.500 19 2.500 22 4.500 19" },
    { b: [[1, 6.500, 5, 11.500], [11.500, 6.500, 7, 17], [8, 6.500, 5.500, 7]], r: [[0, 6.500, 24, 6.500]], y: [[18.500, 0.600, 4.900, 5]] },
    { t: [["y", 3, 15, "#111"], ["a", 14, 15, A]], r: [[0, 15, 24, 15]] },
  ],
];
const hk = "M2 1.600H8M11 1.600H17";
const vk = "M1.600 2V8M1.600 11V17";
const DIST: Glyph[][] = [
  [
    { b: [[0.600, 6.500, 5, 17], [9.500, 9.500, 3.500, 8], [18.500, 7.500, 5, 8]], r: [[0.600, 0, 0.600, 23], [9.500, 0, 9.500, 9], [18.500, 0, 18.500, 8]], k: hk },
    { b: [[0.600, 7.500, 6, 9], [9.500, 6.500, 6, 17], [19.500, 9.500, 4, 12]], r: [[3.500, 0, 3.500, 14], [12.500, 0, 12.500, 14], [21.500, 0, 21.500, 14]], k: "M5 1.600H11M14 1.600H20" },
    { b: [[0.600, 6.500, 4.500, 16], [11.500, 9.500, 3, 8], [18.500, 7.500, 5, 8]], r: [[5.500, 0, 5.500, 7], [14.500, 0, 14.500, 9], [23.400, 0, 23.400, 8]], k: "M7 1.600H13M16 1.600H22" },
    { b: [[0.600, 6.500, 3, 15], [10.500, 9.500, 3, 8], [20.500, 6.500, 3, 17]], r: [[3.600, 0, 3.600, 9], [10.500, 0, 10.500, 9], [13.500, 0, 13.500, 9], [20.500, 0, 20.500, 9]], k: "M4.500 1.600H9.500M14.500 1.600H19.500" },
    { t: [["a", 1, 16, A], ["y", 12, 18, "#111"]], r: [[0.600, 0, 0.600, 24], [14.500, 0, 14.500, 24]], k: "M2 3H13M4 1 2 3 4 5M11 1 13 3 11 5" },
  ],
  [
    { b: [[7.500, 0.600, 8, 5], [8.500, 9.500, 9, 3.500], [6.500, 18.500, 17, 5]], r: [[0, 0.600, 8, 0.600], [0, 9.500, 8.500, 9.500], [0, 18.500, 7, 18.500]], k: vk },
    { b: [[9.500, 0.600, 12, 4], [6.500, 8.500, 17, 6], [7.500, 17.500, 9, 6]], r: [[0, 2.500, 14, 2.500], [0, 11.500, 14, 11.500], [0, 20.500, 14, 20.500]], k: "M1.600 4V10M1.600 13V19" },
    { b: [[7.500, 0.600, 8, 5], [8.500, 11.500, 9, 3], [6.500, 18.500, 17, 5]], r: [[0, 5.500, 8, 5.500], [0, 14.500, 9, 14.500], [0, 23.400, 24, 23.400]], k: "M1.600 7V13M1.600 16V22" },
    { b: [[6.500, 0.600, 17, 3], [8.500, 10.500, 9, 3], [6.500, 20.500, 15, 3]], r: [[0, 3.600, 8, 3.600], [0, 10.500, 9, 10.500], [0, 13.500, 9, 13.500], [0, 20.500, 8, 20.500]], k: "M1.600 5V9.500M1.600 14.500V19.500" },
    { t: [["y", 11, 9, "#111"], ["a", 12, 23, A]], r: [[0, 9.500, 24, 9.500], [0, 23.400, 24, 23.400]], k: "M3 11V22M1 13 3 11 5 13M1 20 3 22 5 20" },
  ],
];

const bx = (x: number, y: number, w: number, h: number) => <rect x={x} y={y} width={w} height={h} fill="url(#blue)" stroke="#222" strokeWidth="1.100" />;
const yb = (x: number, y: number, s = 5) => <rect x={x} y={y} width={s} height={s} fill="#ffd64f" stroke="#3a2c00" strokeWidth="1.100" />;
const REARR = [
  <Svg key="1"><path d="M7 1 12 6 9 13 2.500 12.500 1.500 4ZM12 6 18 5.500 22.500 1M18 5.500 22.500 11.500" stroke="#667" /><g fill="#c4caf8" stroke="#8a93e6">{[[7, 1], [12, 6], [9, 13], [2.500, 12.500], [1.500, 4], [18, 5.500], [22.500, 1], [22.500, 11.500]].map(([x, y], i) => <circle key={i} cx={x} cy={y} r="1.200" />)}</g></Svg>,
  <Svg key="2"><path d="M11 5h6q2 0 2 5M16 8l3 3 2.500-3M6 11v6q0 2 6 2M3.500 13 6 10l2.500 3" stroke="#111" strokeWidth="1.200" />{bx(1, 1.500, 10, 10)}{bx(13, 12.500, 10, 10)}</Svg>,
  <Svg key="3"><path d="M10 5h6q2 0 2 3M6 9v5h8" stroke="#111" strokeWidth="1.200" />{bx(1, 1.500, 8, 8)}{bx(14, 8.500, 8.500, 8)}<path d="M2 16.500h10M1 19.500h12M6 14.500v7M9 14.500v7" stroke="#c00" strokeWidth="1.500" /></Svg>,
  <Svg key="4"><path d="M10 5h6q2 0 2 3" stroke="#111" strokeWidth="1.200" />{bx(1, 1.500, 8, 8)}{bx(14, 8.500, 8.500, 8)}<circle cx="7" cy="17.500" r="4.800" stroke="#d00" strokeWidth="1.200" strokeDasharray="3 1.300" /><path d="M2 22.500h4l-2-3ZM8 11.500l3.500 1-2.500 2.500Z" fill="#d00" /></Svg>,
  <Svg key="5">{yb(1, 2.500)}{yb(13, 0.600)}{yb(18, 7.500)}{yb(10, 10.500)}{yb(1, 18.500)}{yb(11, 17.500)}</Svg>,
  <Svg key="6"><path d="M10 8 16 5M10 13l6 5M20.500 9v8" stroke="#d00" strokeWidth="1.300" strokeDasharray="5 1" />{yb(1, 6.500, 7.500)}{yb(18, 2.500)}{yb(18, 18)}</Svg>,
];

const DockBtn = ({ x }: { x?: boolean }) => (
  <div className="flex h-[11px] w-[11px] items-center justify-center rounded-[2px] border border-[#8c8a86] bg-[#f6f5f4]">
    {x ? (
      <svg width="7" height="7" viewBox="0 0 7 7"><path d="M1 1 6 6M6 1 1 6" stroke="#777" strokeWidth="2" /></svg>
    ) : (
      <div className="h-0 w-0 border-y-[3px] border-r-[4px] border-y-transparent border-r-[#777]" />
    )}
  </div>
);

const AlignHead = () => (
  <svg width="16" height="18" viewBox="0 0 16 18" className="block shrink-0">
    <path d="M.6 0V18" stroke="#c00" strokeWidth="1.300" />
    <g fill="#c3d8ec" stroke="#1d262e"><rect x="2.500" y="1.500" width="6" height="4" /><rect x="2.500" y="7.500" width="13" height="3.500" /><rect x="2.500" y="13" width="10" height="3.500" /></g>
  </svg>
);

const ExportIcon = () => (
  <svg width="17" height="18" viewBox="0 0 17 18" className="block shrink-0">
    <path d="M1.500 1H11L14 4V17H1.500Z" fill="#f0eeec" stroke="#aaa" />
    <path d="M3 4h7M3 6.500h7" stroke="#d99" />
    <path d="M5 8h5V5.500L15 10 10 14.500V12H5Z" fill="#d869d0" stroke="#b86ab2" strokeWidth="0.800" />
  </svg>
);

const OArrow = ({ d }: { d: string }) => (
  <div className="flex w-[30px] justify-center"><Svg s={18} v={20}><path d={d} fill="url(#orange)" stroke="#d9682c" /></Svg></div>
);

function Spin({ value }: { value: string }) {
  return (
    <div className="flex h-[25px] w-[57px] rounded-[4px] border border-[#b5b2ae] bg-white">
      <div className="flex w-[41px] items-center pb-px pl-[5px] text-[14px]">{value}</div>
      <div className="flex flex-1 items-center justify-center rounded-r-[3px] border-l border-[#cfccc9] bg-[#f7f6f5]"><Updown /></div>
    </div>
  );
}

const Section = ({ children }: Kids) => <div className="h-5 pl-[8px] text-[14.600px] font-bold leading-5 text-[#5a5855]">{children}</div>;
const GlyphRow = ({ items }: { items: React.ReactNode[] }) => (
  <div className="flex h-6 justify-end gap-[12px] pr-[11px]">{items}</div>
);

const LAYERS = ["group3", "group2", "group1", "labels", "layout_design"];

function Dock() {
  return (
    <div className="flex h-[944px] w-[530px] shrink-0 flex-col overflow-hidden border-b border-l border-t border-[#bab7b3] pl-[3px] pr-px pt-[3px] text-[14.600px] text-[#4a4946]">
      {/* layers panel */}
      <div className="flex h-[25px] items-center border border-dotted border-[#555] pb-[2px] text-[14.600px]">
        <LayersIcon />
        <span className="flex-1">Layers (Shift+Ctrl+L)</span>
        <div className="mr-[6px] flex gap-[13px]"><DockBtn /><DockBtn x /></div>
      </div>
      <div className="flex h-[433px] flex-col border border-t-0 border-[#c9c6c3] px-[4px] pt-[4px]">
        <div className="h-[327px] border border-[#b5b2ae] bg-white">
          {LAYERS.map((n) => (
            <div key={n} className={`flex h-[23px] items-center ${n === "labels" ? "bg-gradient-to-b from-[#e8e7e5] to-[#d9d8d6] text-[#2c2b29]" : "text-[#3c3b39]"}`}>
              <div className="flex h-[23px] w-[22px] items-center justify-center border-r border-[#cfcdca] pb-px">{n === "layout_design" ? <EyeClosed /> : <Eye />}</div>
              <div className="flex h-[23px] w-[22px] items-center justify-center border-r border-[#cfcdca] pb-px pl-px"><Lock /></div>
              <span className="pl-[15px]">{n}</span>
            </div>
          ))}
        </div>
        <div className="flex h-[32px] items-center pb-[2px]">
          <div className="flex w-[30px] justify-center"><Svg s={18}><path d="M6.500 1.500h5v5h5v5h-5v5h-5v-5h-5v-5h5Z" fill="#98c52b" stroke="#79a52a" /></Svg></div>
          <div className="flex w-[30px] justify-center"><Svg s={18}><rect x="1" y="6" width="16" height="6" fill="#d8414a" stroke="#cf5058" /></Svg></div>
          <div className="flex-1" />
          <OArrow d="M3 1h14v2.500H13.500L17 9H12v9.500H8V9H3L6.500 3.500H3Z" />
          <OArrow d="M10 1 17 8.500H12.500V18.500H7.500V8.500H3Z" />
          <OArrow d="M10 18.500 3 11H7.500V1.500H12.500V11H17Z" />
          <OArrow d="M3 18.500h14V16H14L17 10H12V1.500H8V10H3L6 16H3Z" />
        </div>
        <div className="mt-[1px] flex h-[29px] items-center">
          <span className="w-[99px] whitespace-nowrap">Blend mode:</span>
          <div className="flex h-[29px] flex-1 items-center justify-between rounded-[4px] border border-[#b5b2ae] bg-gradient-to-b from-white to-[#efedeb] pl-[5px] pr-2 text-[#3c3b39]">
            Normal <Updown />
          </div>
        </div>
        <div className="ml-px mt-[6px] flex h-[26px] rounded-[4px] border border-[#b5b2ae] bg-white">
          <div className="my-[3px] ml-[4px] flex w-[485px] items-center justify-between rounded-[3px] bg-[#f07746] pb-[2px] pl-[2px] leading-4 text-white">
            <span>Opacity (%)</span><span className="tracking-[-0.6px]">100.0</span>
          </div>
          <div className="ml-[5px] flex flex-1 items-center justify-center border-l border-[#cfccc9]"><Updown /></div>
        </div>
      </div>
      {/* tabs */}
      <div className="mt-[3px] flex h-[25px] gap-[3px] pl-px text-[14.500px]">
        <div className="flex w-[264px] items-center rounded-[4px] border border-[#b5b2ae] bg-gradient-to-b from-white to-[#ebe9e7] pb-px pl-[3px] text-[#3c3b39]">
          <ExportIcon /><span className="ml-px flex-1 whitespace-nowrap tracking-[0.05px]">Export PNG Image (Shift+Ctrl+E)</span>
          <div className="mr-[6px] h-0 w-0 border-x-[3px] border-b-[6px] border-x-transparent border-b-[#b5b3b0]" />
        </div>
        <div className="flex w-[183px] items-center rounded-[4px] border border-[#aaa7a3] bg-[#dddbd8] pb-px pl-[3px] text-[#7a7875]">
          <LayersIcon /><span className="ml-[2px] flex-1 whitespace-nowrap tracking-[0.05px]">Layers (Shift+Ctrl+L)</span>
          <div className="mr-[4px] h-0 w-0 border-x-[3px] border-b-[6px] border-x-transparent border-b-[#5c5a57]" />
        </div>
      </div>
      <div className="flex h-[11px] items-center justify-center gap-[2px]">
        <i className="h-1 w-px bg-[#b5b2ae]" /><i className="h-1 w-px bg-[#b5b2ae]" /><i className="h-1 w-px bg-[#b5b2ae]" />
      </div>
      <div className="flex h-[23px] items-center pb-px text-[14.800px]">
        <AlignHead />
        <span className="flex-1">Align and Distribute (Shift+Ctrl+A)</span>
        <div className="mr-[6px] flex gap-[13px]"><DockBtn /><DockBtn x /></div>
      </div>
      {/* align panel */}
      <div className="flex flex-1 flex-col overflow-hidden border-x border-t border-[#c4c1bd]">
        <div className="mt-[3px]"><Section>Align</Section></div>
        <div className="mt-[3px] flex h-[29px] items-center justify-end pr-[7px]">
          <span className="mr-[5px] tracking-[0.1px]">Relative to:</span>
          <div className="flex h-[29px] w-[139px] items-center justify-between rounded-[4px] border border-[#b5b2ae] bg-gradient-to-b from-white to-[#efedeb] pl-[5px] pr-2 text-[14.200px]">
            Last selected <Updown />
          </div>
        </div>
        <div className="mt-[2px] flex h-[20px] items-center justify-end pr-[10px]">
          <span className="mr-[8px] text-[14.500px]">Treat selection as group:</span>
          <div className="h-[14px] w-[14px] rounded-[3px] border border-[#a5a29e] bg-white" />
        </div>
        <div className="mt-[9px] flex flex-col gap-[12px]">
          {ALIGN.map((r, i) => <GlyphRow key={i} items={r.map((g, k) => <AlignGlyph key={k} g={g} />)} />)}
        </div>
        <div className="mt-[11px]"><Section>Distribute</Section></div>
        <div className="mt-[8px] flex flex-col gap-[12px]">
          {DIST.map((r, i) => <GlyphRow key={i} items={r.map((g, k) => <AlignGlyph key={k} g={g} />)} />)}
        </div>
        <div className="mt-[11px]"><Section>Rearrange</Section></div>
        <div className="mt-[8px]"><GlyphRow items={REARR} /></div>
        <div className="mt-[11px]"><Section>Remove overlaps</Section></div>
        <div className="mt-[7px] flex h-[25px] items-center justify-end pr-[11px]">
          <span className="w-[19px]">H:</span><Spin value="0.0" />
          <span className="ml-[6px] w-[17px]">V:</span><Spin value="0.0" />
          <div className="ml-[11px]">
            <Svg>{bx(1, 0.600, 5.500, 6.500)}{bx(1, 10.500, 5.500, 13)}{bx(10, 0.600, 6.500, 23)}{bx(20, 0.600, 3, 23)}</Svg>
          </div>
        </div>
        <div className="mt-[11px]"><Section>Nodes</Section></div>
        <div className="mt-[8px]">
          <GlyphRow
            items={[
              <Svg key="1"><path d="M4 7q0-2 2-2t2 2M20 0q-2 4-2 8" stroke="#999" strokeWidth="1.200" /></Svg>,
              <Svg key="2"><path d="M0 0q5 3 11 3 7 1 8 6" stroke="#999" strokeWidth="1.200" /><path d="M11.500 0V9" stroke="#c00" /><rect x="9" y="1" width="4.500" height="4.500" fill="#8ab" stroke="#00d" strokeWidth="1.400" /></Svg>,
              <Svg key="3"><path d="M2.500 0V9M11.500 0V9M20.500 0V9" stroke="#c00" strokeWidth="1.200" /><path d="M4 1.500H10M13 1.500H19M5 9q2-3 4 0" stroke="#222" /></Svg>,
              <Svg key="4"><path d="M2 1q8 2 12 8" stroke="#999" /><path d="M8 2.500H24" stroke="#c00" strokeWidth="1.200" /><path d="M22 4v5" stroke="#222" /><rect x="6" y="0.800" width="4" height="4" fill="#8ab" stroke="#00d" strokeWidth="1.400" /></Svg>,
            ]}
          />
        </div>
      </div>
    </div>
  );
}

/* ---------- command and snap bars ---------- */
const mag = (inner: React.ReactNode) => (
  <Svg s={20}>
    <path d="m14 14 5 5" stroke="#111" strokeWidth="2.500" />
    <circle cx="9.500" cy="9.500" r="8.200" fill="url(#blue)" stroke="#222" strokeWidth="1.500" />
    {inner}
  </Svg>
);
const two = (inner?: React.ReactNode) => (
  <Svg s={20}>{bx(1, 1, 11, 10)}{bx(6, 5, 13, 13)}{inner}</Svg>
);
const group = (y: boolean) => (
  <Svg s={20}>
    <path d="M1 1h2v2H1zM17 1h2v2h-2zM1 17h2v2H1zM17 17h2v2h-2z" fill="#111" />
    <rect x="3.500" y="9" width="10" height="8" fill={y ? "#ffd64f" : "#b9d0e8"} stroke="#444" />
    <circle cx="12.500" cy="6.500" r="4.500" fill="#cfe0f0" stroke="#555" />
  </Svg>
);
const copyIcon = <Svg s={20}><path d="M2 1.500h10v11H2zM8 6.500h10v12H8z" fill="#f1f1ef" stroke="#a5a5a3" /><path d="M4 4h6M4 6.500h3M4 9h3M10 9.500h6M10 12h6M10 14.500h5" stroke="#b5b5b3" /></Svg>;

const CMDS: (React.ReactNode | "sep")[] = [
  <Svg s={20}><path d="M3 1h9l4 4V18H3Z" fill="#f2f2f0" stroke="#c4c4c2" /><path d="M12 1v4h4" stroke="#bbb" /><path d="M13 10.500h3v3h3.500v3H16V19.500h-3v-3H10v-3h3Z" fill="#9fcc35" stroke="#6a9a1c" strokeWidth="0.900" /></Svg>,
  <Svg s={20}><path d="M2 10V2h6l1 2h8v6Z" fill="#efe4dc" stroke="#b59d8c" /><path d="M1 9H8l1-1.500H19V18H1Z" fill="url(#orange)" stroke="#d2672c" /></Svg>,
  <Svg s={20}><path d="M3 3H17L19 13V18H1V13Z" fill="#c9c9c7" stroke="#8b8b89" /><path d="M1.500 14H18.500V18H1.500Z" fill="#555" /><path d="M8 1h4v5h3.500L10 12 4.500 6H8Z" fill="#a6d63a" stroke="#6fa01a" strokeWidth="0.900" /></Svg>,
  <Svg s={20}><rect x="4.500" y="1" width="11" height="9" fill="#f7f7f7" stroke="#999" /><path d="M10 3v4M8 5.500 10 7.500 12 5.500" stroke="#999" strokeWidth="1.500" /><rect x="1" y="9" width="18" height="9" rx="2" fill="#b9b9b7" stroke="#6e6e6c" /><rect x="4" y="9" width="12" height="5" fill="#333" /><rect x="4" y="15" width="12" height="3" fill="#efefef" /></Svg>,
  "sep",
  <Svg s={20}><path d="M3 1h11l4 4V19H3Z" fill="#eeeeec" stroke="#b0b0ae" /><path d="M1 7.500h7V4.500L14.500 10 8 15.500V12.500H1Z" fill="#5b9bd5" stroke="#3b78b0" strokeWidth="0.800" /></Svg>,
  <Svg s={20}><path d="M2 1h11l4 4V19H2Z" fill="#eeeeec" stroke="#b0b0ae" /><path d="M4 4h6M4 6.500h6" stroke="#d99" /><path d="M7 8.500h6V5.500L19.500 11 13 16.500V13.500H7Z" fill="#d869d0" stroke="#b04ba9" strokeWidth="0.800" /></Svg>,
  "sep",
  <Svg s={20}><path d="M1 8 8 2.500V6q11 0 11 10-3-5-11-5v3.500Z" fill="#dcdbd8" stroke="#c2c0bd" /></Svg>,
  <Svg s={20}><path d="M19 8 12 2.500V6Q1 6 1 16q3-5 11-5v3.500Z" fill="#dcdbd8" stroke="#c2c0bd" /></Svg>,
  "sep",
  copyIcon,
  <Svg s={20}><path d="M7 1 12 12M13 1 8 12" stroke="#999" strokeWidth="1.700" /><ellipse cx="6.500" cy="15.500" rx="2.700" ry="3.200" stroke="#d14545" strokeWidth="1.900" /><ellipse cx="13.500" cy="15.500" rx="2.700" ry="3.200" stroke="#d14545" strokeWidth="1.900" /></Svg>,
  <Svg s={20}><rect x="1.500" y="3" width="12" height="15" fill="#c2a883" stroke="#9d8563" /><rect x="5" y="1" width="5" height="4" fill="#999" /><rect x="8" y="8" width="11" height="11" fill="#efefed" stroke="#a5a5a3" /><path d="M10 11h7M10 13.500h7M10 16h5" stroke="#bbb" /></Svg>,
  "sep",
  mag(<rect x="5" y="5" width="9" height="9" fill="#fff" stroke="#222" strokeDasharray="1.500 1" />),
  mag(<g fill="#ffe27a" stroke="#333"><rect x="5" y="4.500" width="6" height="6" /><rect x="8.500" y="8.500" width="6" height="6" /></g>),
  mag(<rect x="6" y="4.500" width="7" height="10" fill="url(#page)" stroke="#222" />),
  "sep",
  two(),
  two(<g><path d="M10.500 10.500V9a2 2 0 0 1 4 0v2" stroke="#333" strokeWidth="1.300" /><rect x="8.500" y="11" width="8" height="5" fill="#ffc93c" stroke="#553" /></g>),
  two(<g><path d="M12.500 10.500V9a2 2 0 0 1 4 0v2" stroke="#333" strokeWidth="1.300" /><rect x="8.500" y="11" width="8" height="5" fill="#8fd07c" stroke="#333" /></g>),
  "sep",
  group(false),
  group(true),
  "sep",
  <Svg s={20}><rect x="1.500" y="1.500" width="16" height="16" fill="url(#page)" stroke="#111" /><path d="M1 1H19V5L9 12 3 18Q4 8 14 3H1Z" fill="#111" /><path d="m15 4 4.500-3v7l-2.500 1Z" fill="#f0b52e" /><path d="m4 17 7-6 3 2-4 4Z" fill="#ccc" stroke="#222" /><path d="M3 18.500h12" stroke="#111" strokeWidth="1.500" /></Svg>,
  <Svg s={20}><path d="M1 1H19V6.500H17Q16.500 3.200 13 3.200H12.500V15q0 2 2.500 2.200V19H5V17.200Q7.500 17 7.500 15V3.200H7Q3.500 3.200 3 6.500H1Z" fill="#111" /></Svg>,
  <LayersIcon w={19} />,
  <Svg s={20}><rect x="1" y="1" width="18" height="18" fill="#f1f1ef" stroke="#111" strokeWidth="1.300" /><rect x="1" y="1" width="18" height="4" fill="#8fb2d6" stroke="#111" /><path d="M8.500 8 4.500 11.500 8.500 15M11.500 8l4 3.500-4 3.500" stroke="#222" strokeWidth="1.300" /></Svg>,
  <AlignHead />,
  "sep",
  <Svg s={20}><circle cx="10" cy="10" r="8" fill="#e2e1df" stroke="#b3b1ae" strokeWidth="1.500" strokeDasharray="3 1" /><circle cx="10" cy="10" r="5" stroke="#bbb" /><circle cx="10" cy="10" r="2" fill="#f2f1f0" stroke="#aaa" /></Svg>,
  <Svg s={20}><circle cx="10" cy="10" r="8" fill="#e2e1df" stroke="#b3b1ae" strokeWidth="1.500" strokeDasharray="3 1" /><path d="M11 9 14 6q0-4 4-4l-1 3 2 1q-1 4-5 3l-3 2Z" fill="#e8e8e8" stroke="#aaa" /><path d="m3 17 8-8" stroke="#c9373b" strokeWidth="3" strokeLinecap="round" /></Svg>,
];

const snapNode = (
  <Svg s={20}>
    <path d="M5 5 13 12.500" stroke="#111" strokeWidth="1.300" />
    <path d="m14.500 14.500-4.500-1 3.500-3.500Z" fill="#111" />
    <circle cx="4" cy="3.500" r="2.200" fill="#b9c6ff" stroke="#1b22e0" strokeWidth="1.300" />
    <circle cx="16" cy="16" r="2.200" fill="#a5d0cc" stroke="#1a7f22" strokeWidth="1.300" />
  </Svg>
);
const dn = "#b5b3b0";
const gn = (x: number, y: number) => <circle cx={x} cy={y} r="2.200" fill="#9fc5cc" stroke="#148a1e" strokeWidth="1.300" />;
const SNAPS: ({ on?: boolean; i: React.ReactNode } | "sep")[] = [
  { on: true, i: snapNode },
  "sep",
  { i: snapNode },
  { i: <Svg s={20}><path d="M16.500 1V16.500H1" stroke={dn} strokeDasharray="2 1" strokeWidth="1.300" /></Svg> },
  { i: <Svg s={20}><path d="M16 1V16H1" stroke={dn} strokeDasharray="2 1" strokeWidth="1.300" /><circle cx="16" cy="16" r="2.500" fill="#ddd" stroke={dn} /></Svg> },
  { i: <Svg s={20}><path d="M15.500 1V15H1" stroke={dn} strokeDasharray="2 1" strokeWidth="1.300" /><circle cx="15.500" cy="5" r="2.500" fill={dn} /></Svg> },
  { i: <Svg s={20}><path d="M16 1V15H1" stroke={dn} strokeDasharray="2 1" strokeWidth="1.300" /><circle cx="6" cy="5" r="2" fill="#e6e6e4" stroke={dn} /></Svg> },
  "sep",
  { on: true, i: snapNode },
  { i: <Svg s={20}><path d="M2 3Q13 2 13 12q0 4-1 5 7-1 6-8M8 17h5" stroke="#137a1c" strokeWidth="1.600" /></Svg> },
  { i: <Svg s={20}><path d="M2 18 19 2M2 13l17-6" stroke="#666" strokeWidth="1.300" />{gn(10.500, 10)}</Svg> },
  { i: <Svg s={20}><path d="M2 2Q12 1 12 10M10 16q8 0 7-8" stroke="#666" strokeWidth="1.300" />{gn(10, 15.500)}</Svg> },
  { i: <Svg s={20}><path d="M2 3Q14 3 14 11q0 5-3 6 7 0 7-6" stroke="#666" strokeWidth="1.300" /><rect x="7.500" y="2.500" width="4" height="4" fill="#8fb5c0" stroke="#148a1e" strokeWidth="1.400" /></Svg> },
  { i: <Svg s={20}><path d="M2 18 19 2" stroke="#888" /><path d="m3 17 3-6M5 17l3-6M12 9l3-6M15 9l3-7M2 13l5 3M12 5l6 2" stroke="#c11" strokeWidth="1.300" />{gn(10, 10)}</Svg> },
  "sep",
  { on: true, i: snapNode },
  { i: <Svg s={20}><path d="M16.500 3V16.500H2" stroke="#888" strokeWidth="1.200" />{gn(8, 7)}</Svg> },
  { i: <Svg s={20}><path d="M17 2V16H2" stroke="#222" strokeDasharray="2 1" strokeWidth="1.300" /><path d="M7 3v7M3.500 6.500h7" stroke="#222" strokeWidth="1.300" /></Svg> },
  { i: <Svg s={20}><text x="4.500" y="16" fontSize="19" fontWeight="700" fill="#111" stroke="#111" strokeWidth="0.800" fontFamily="'Liberation Sans', sans-serif">A</text><path d="M3 17H18" stroke="#148a1e" />{gn(4, 17)}</Svg> },
  "sep",
  { i: <Svg s={20}><rect x="4" y="2" width="12" height="16" fill="url(#page)" stroke="#333" strokeWidth="1.200" /></Svg> },
  { on: true, i: <Svg s={20}><path d="M4 1V19M8.500 1V19M13 1V19M17.500 1V19M1 4H19M1 8H19M1 12.500H19M1 17H19" stroke="#1d1df0" strokeWidth="1.200" /></Svg> },
  { on: true, i: <Svg s={20}><path d="M2.500 1V19M16.500 1V19M6.500 18 13.500 2" stroke="#1d1df0" strokeWidth="1.300" /></Svg> },
];

const HSep = () => <div className="flex h-3 items-center"><div className="h-px w-[18px] bg-[#d3d0cd]" /></div>;

function SideBars() {
  return (
    <div className="flex shrink-0 pt-px">
      <div className="flex w-[34px] flex-col items-center">
        {CMDS.map((c, k) => (c === "sep" ? <HSep key={k} /> : <div key={k} className="flex h-[30px] items-center">{c}</div>))}
      </div>
      <div className="flex w-[30px] flex-col items-center">
        {SNAPS.map((c, k) =>
          c === "sep" ? <HSep key={k} /> : (
            <div key={k} className="flex h-[30px] items-center">
              <div className={`flex h-[28px] w-[28px] items-center justify-center ${c.on ? "rounded-[4px] border border-[#aaa7a3] bg-gradient-to-b from-[#dedcd9] to-[#edebe9]" : ""}`}>{c.i}</div>
            </div>
          )
        )}
      </div>
    </div>
  );
}

/* ---------- title bar ---------- */
function TitleBar() {
  return (
    <div className="flex h-6 shrink-0 items-center justify-between bg-gradient-to-b from-[#5b5950] to-[#3d3c38] pb-px text-[#dfdbd2]">
      <span className="whitespace-nowrap pl-[6px] text-[15px] font-bold leading-5 tracking-[-0.15px]">figure_groups_and_templates_output.svg - Inkscape</span>
      <div className="flex items-center text-[14px]">
        <Svg s={20}><path d="m5.500 1.500 4.500 3 4.500-3L19 5l-3 4 3 4-4.500 2.500L10 19l-4.500-3.500L1 13l3-4-3-4Z" fill="#dfdbd2" /></Svg>
        <div className="ml-[12px]"><Svg s={18} v={20}><path d="M6.500 15V4M13.500 5.500V16" stroke="#dfdbd2" strokeWidth="2.600" /><path d="M6.500 1 11 6.500H2ZM13.500 19.500 18 14H9Z" fill="#dfdbd2" /></Svg></div>
        <div className="ml-[13px] flex h-5 w-5 items-center justify-center rounded-[2px] bg-[#dfdbd2] text-[13px] tracking-[-0.3px] text-[#3d3c38]">En</div>
        <div className="ml-[8px]">
          <Svg s={16}><path d="M4 4.500 11.500 11.500 8 14.500V1.500L11.500 4.500 4 11.500" stroke="#dfdbd2" strokeWidth="1.200" /></Svg>
        </div>
        <svg width="25" height="14" viewBox="0 0 25 14" className="ml-[10px]" fill="none">
          <rect x="0.800" y="1.500" width="21" height="11" rx="1.500" stroke="#dfdbd2" strokeWidth="1.200" />
          <path d="M3 3.500H19.500V10.500H3Z" fill="#8d8a83" /><path d="M22.500 4.500h2v5h-2Z" fill="#dfdbd2" />
          <path d="m7 4.500 6 1.500-.5 1L16.500 10l-5.500-1.500.5-1Z" fill="#efece6" stroke="#efece6" strokeWidth="0.600" />
        </svg>
        <svg width="20" height="18" viewBox="0 0 20 18" className="ml-[11px]" fill="none" stroke="#dfdbd2" strokeWidth="1.500">
          <path d="M0 6.500h3L7.500 3V15L3 11.500H0Z" fill="#dfdbd2" stroke="none" />
          <path d="M10 6q2 3 0 6M13 4q3.500 5 0 10" /><path d="M16 2.500q5 6.500 0 13" strokeOpacity="0.400" />
        </svg>
        <span className="ml-[16px] w-[53px] whitespace-nowrap text-[14.300px] tracking-[-0.1px]">5:30 PM</span>
        <div className="ml-[10px] mr-[6px]">
          <Svg s={20}><circle cx="10" cy="10.500" r="5.500" stroke="#dfdbd2" strokeWidth="1.800" /><circle cx="10" cy="10.500" r="7.800" stroke="#dfdbd2" strokeWidth="2" strokeDasharray="2.500 3.630" /><path d="M10 1v9" stroke="#4a4943" strokeWidth="5" /><path d="M10 2v8" stroke="#dfdbd2" strokeWidth="2" /></Svg>
        </div>
      </div>
    </div>
  );
}

/* ---------- bottom bars ---------- */
function Palette() {
  return (
    <div className="flex h-[18px] items-start">
      <div className="flex h-[18px] w-[1602px] border-y border-r border-[#bab7b3] pl-px">
        <svg width="16" height="16" viewBox="0 0 16 16" className="block bg-white"><path d="M1 1 15 15M15 1 1 15" stroke="#7a1414" strokeWidth="1.500" /></svg>
        {SWATCHES.map((c, i) => <div key={i} className="h-4 w-4" style={{ backgroundColor: `#${c}` }} />)}
      </div>
      <div className="ml-[4px] mt-[2px] h-0 w-0 border-y-[4px] border-r-[5px] border-y-transparent border-r-[#6c6a67]" />
    </div>
  );
}

function StatusBar() {
  return (
    <div className="flex h-7 items-center pb-px text-[13.500px] text-[#4a4946]">
      <div className="w-[73px] pl-[2px] leading-[14px]">Fill:<br />Stroke:</div>
      <div className="w-[53px] leading-[14px] tracking-[-0.3px]">N/A<br />N/A</div>
      <span className="w-[15px]">O:</span>
      <div className="flex h-[21px] w-[46px] rounded-[4px] border border-[#cfccc9] bg-[#e9e7e5]">
        <div className="flex w-[31px] items-center pl-[4px] text-[#b9b6b2]">0</div>
        <div className="flex flex-1 items-center justify-center border-l border-[#d8d5d2] bg-[#f2f0ee]"><Updown dim /></div>
      </div>
      <div className="ml-[2px] mr-[5px] h-[26px] w-px bg-[#d3d0cd]" />
      <Eye />
      <div className="ml-[5px]"><Lock /></div>
      <div className="ml-[5px] flex h-[26px] w-[126px] items-center justify-between rounded-[4px] border border-[#b5b2ae] bg-gradient-to-b from-white to-[#efedeb] pl-[6px] pr-[7px] text-[13.500px] font-bold tracking-[-0.3px]">
        •labels <Updown />
      </div>
      <span className="ml-[5px] flex-1 whitespace-nowrap text-[14.600px]">No objects selected. Click, Shift+click, Alt+scroll mouse on top of objects, or drag around objects to select.</span>
      <div className="h-7 w-px bg-[#d3d0cd]" />
      <div className="w-[74px] whitespace-pre pl-[3px] font-['DejaVu_Sans_Mono'] text-[11.500px] leading-[14px] tracking-[-0.7px]">{"X:  719.83\nY: -445.48"}</div>
      <span className="w-[13px]">Z:</span>
      <div className="flex h-[20px] w-[55px] rounded-[4px] border border-[#b5b2ae] bg-white">
        <div className="flex w-[40px] items-center justify-end pr-[5px] text-[13px] tracking-[-0.3px]">71%</div>
        <div className="flex flex-1 items-center justify-center rounded-r-[3px] border-l border-[#cfccc9] bg-[#f7f6f5]"><Updown /></div>
      </div>
      <svg width="14" height="14" viewBox="0 0 14 14" className="ml-[6px] self-end"><path d="M12 1h1.500M9 4.500h1.500M12 4.500h1.500M6 8h1.500M9 8h1.500M12 8h1.500M3 11.500h1.500M6 11.500h1.500M9 11.500h1.500M12 11.500h1.500" stroke="#aaa7a3" strokeWidth="1.500" /></svg>
    </div>
  );
}

export default function App() {
  return (
    <div className="flex h-[1050px] w-[1680px] flex-col overflow-hidden bg-[#f2f1f0] font-['Noto_Sans',sans-serif] text-[14px] text-[#4a4946]">
      <Defs />
      <TitleBar />
      <div className="flex h-[1026px]">
        <aside className="flex w-[65px] shrink-0 flex-col gap-[7px] border-r border-[#8a4a7c] bg-[#641153] pt-[6px]">
          {LAUNCHER.map((l, k) => <Tile key={k} bg={l.bg} run={l.run} focus={l.focus}>{l.icon}</Tile>)}
          <div className="mt-[77px]"><Tile><TrashIcon /></Tile></div>
        </aside>
        <main className="flex w-[1615px] flex-col">
          <Toolbar />
          <div className="flex h-[944px]">
            <Toolbox />
            <div className="flex w-[953px] shrink-0 flex-col">
              <TopRuler />
              <div className="flex h-[908px]">
                <LeftRuler />
                <Canvas />
                <div className="w-[3px] bg-white pt-[165px]"><div className="h-[743px] w-[3px] bg-[#f07746]" /></div>
              </div>
              <div className="ml-[94px] mt-[8px] h-[3px] w-[562px] bg-[#f07746]" />
            </div>
            <div className="flex w-[30px] shrink-0 flex-col pt-[4px]">
              <div className="ml-[4px] flex h-[16px] w-[16px] items-center justify-center rounded-[4px] border border-[#aaa7a3] bg-[#f7f6f5]">
                <svg width="8" height="10" viewBox="0 0 8 10" fill="none" stroke="#888"><path d="M2 3.500 4 1.500H6V8.500H3V4" /></svg>
              </div>
              <div className="ml-[26px] mt-[449px] flex flex-col gap-[2px]">
                <i className="h-px w-1 bg-[#b5b2ae]" /><i className="h-px w-1 bg-[#b5b2ae]" /><i className="h-px w-1 bg-[#b5b2ae]" />
              </div>
              <svg width="12" height="12" viewBox="0 0 12 12" className="ml-[5px] mt-[452px]" fill="#c9c8c5" stroke="#a5a3a0"><path d="m2 1 9 6-6 4-3-4Z" /></svg>
            </div>
            <Dock />
            <div className="h-[907px] w-[3px] shrink-0 bg-[#f07746]" />
            <SideBars />
          </div>
          <div className="relative">
            <Palette />
            <div className="absolute left-0 top-[15px] h-[3px] w-[371px] bg-[#f07746]" />
          </div>
          <StatusBar />
        </main>
      </div>
    </div>
  );
}
